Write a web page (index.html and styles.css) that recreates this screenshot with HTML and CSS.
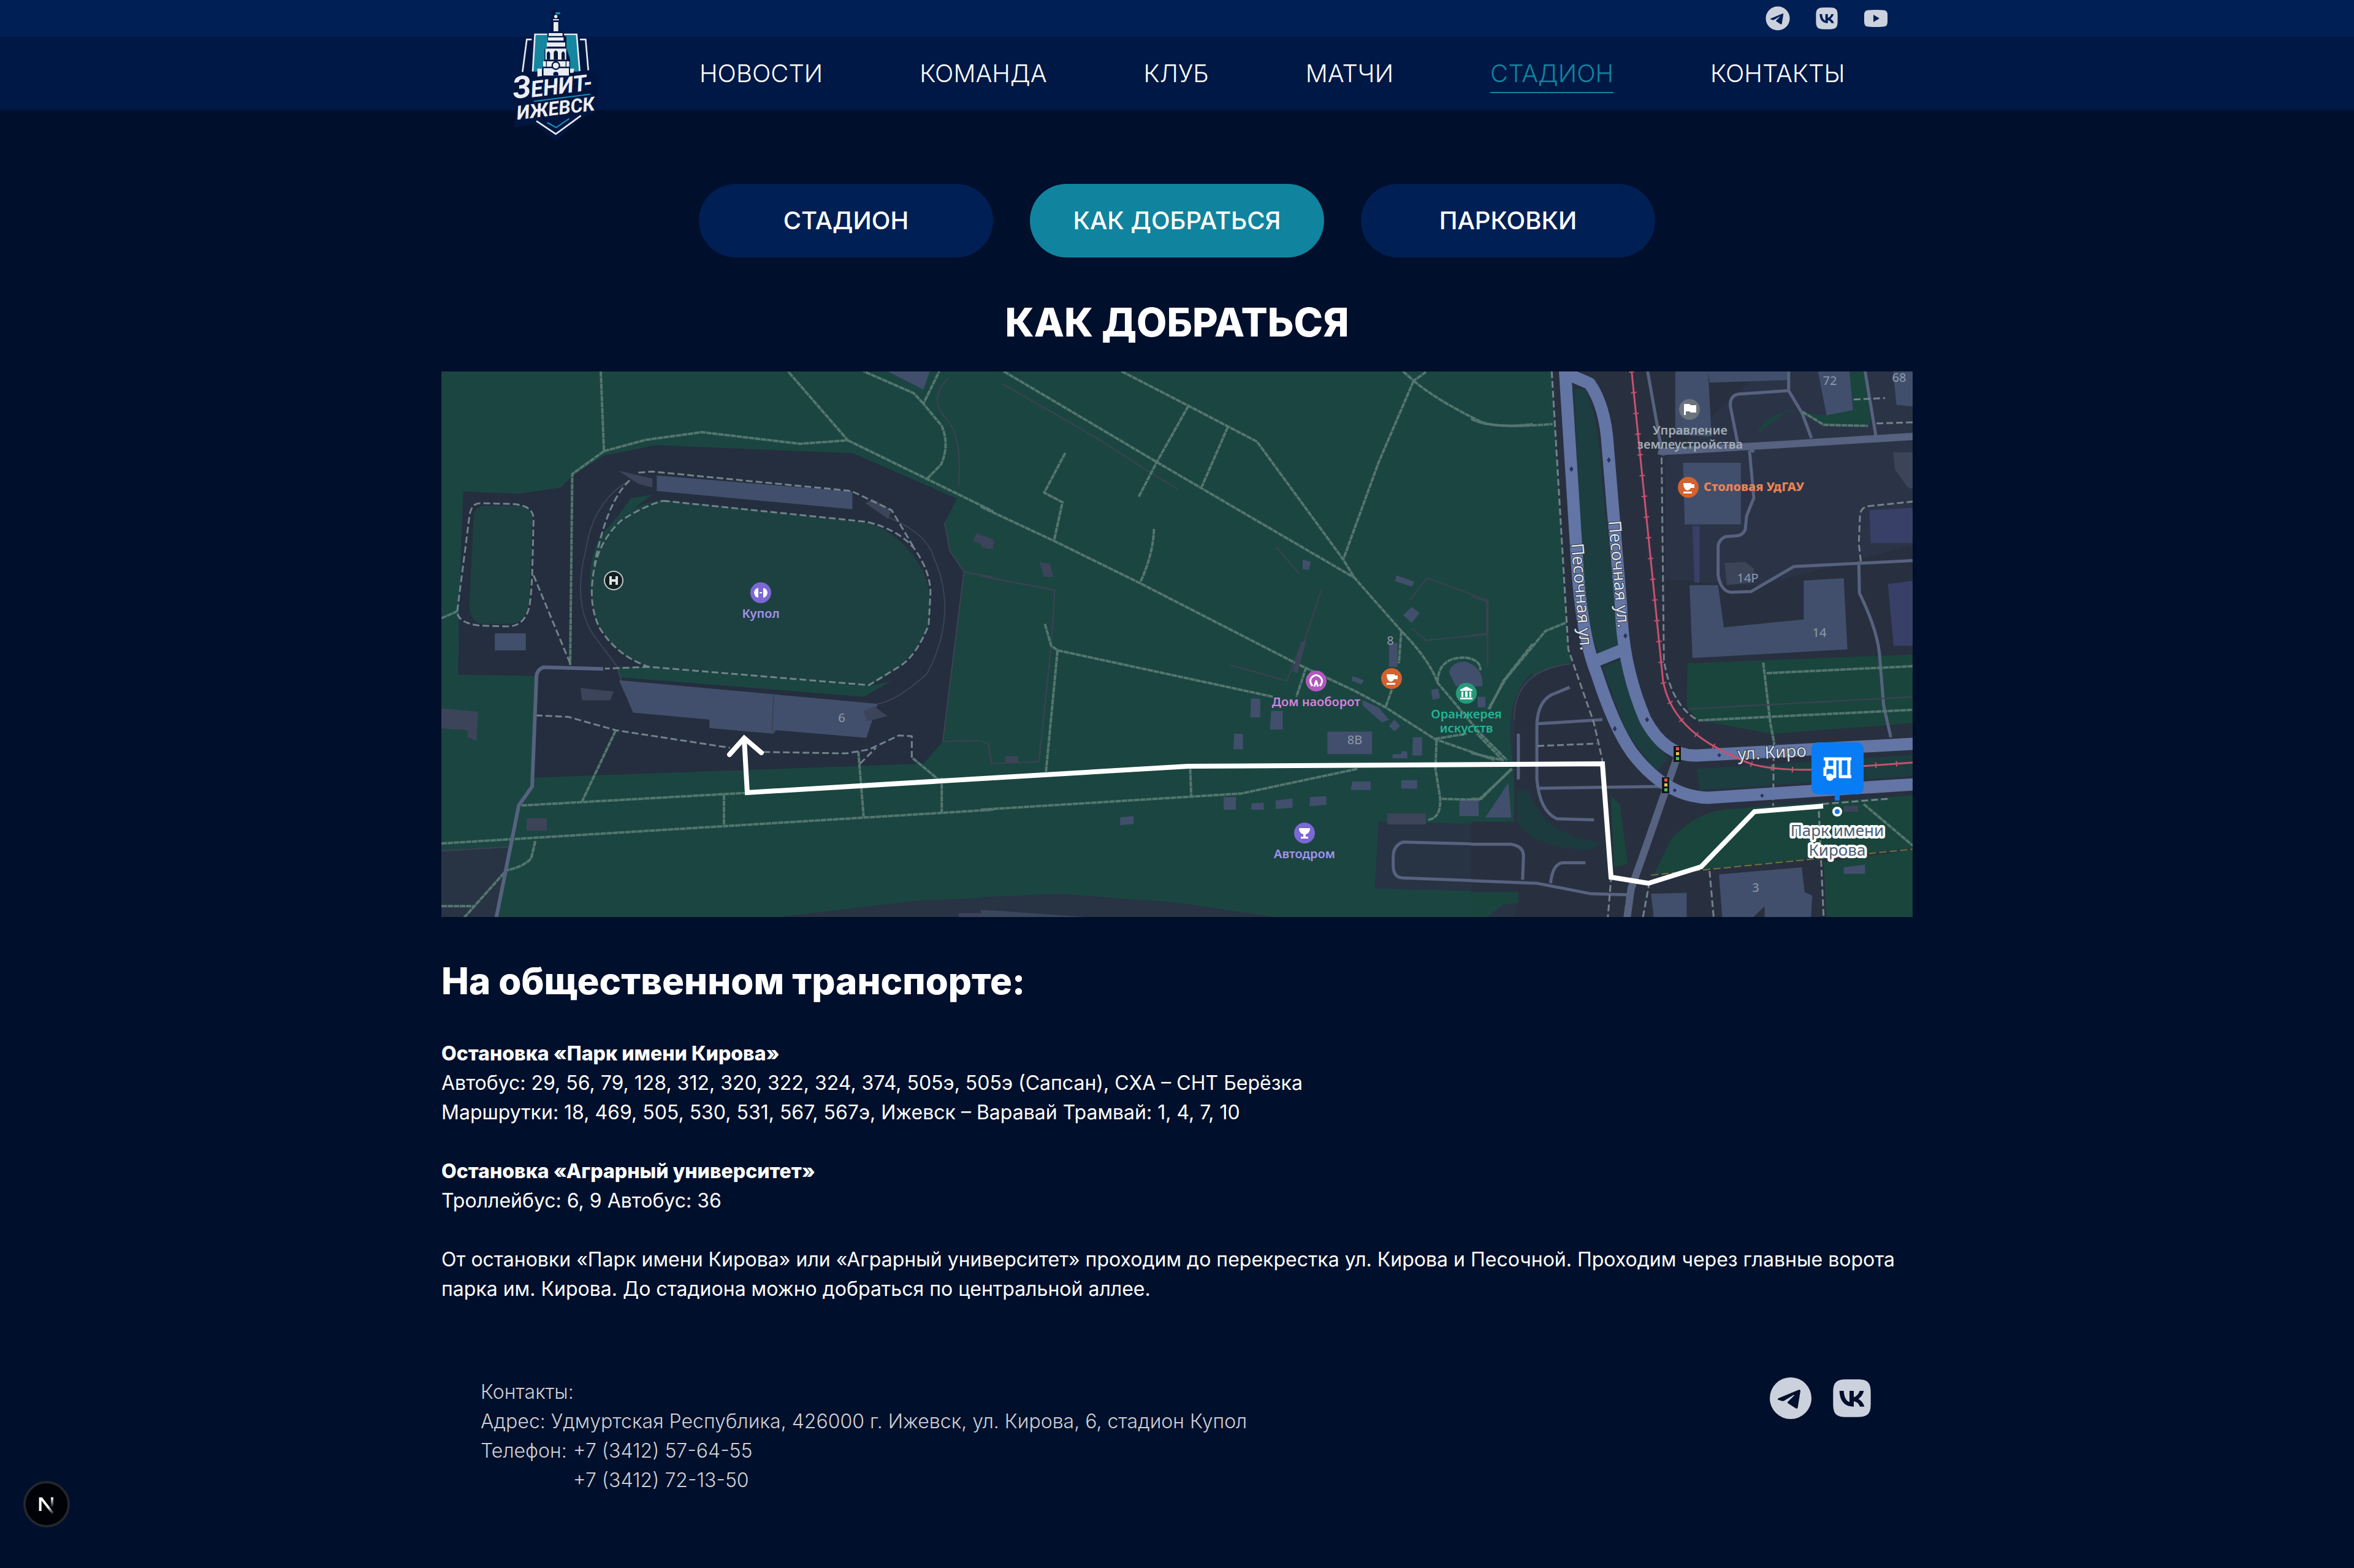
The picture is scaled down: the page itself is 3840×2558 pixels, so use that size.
FILE: index.html
```html
<!DOCTYPE html>
<html lang="ru">
<head>
<meta charset="utf-8">
<meta name="viewport" content="width=device-width, initial-scale=1">
<title>Как добраться — Зенит-Ижевск</title>
<link rel="stylesheet" href="styles.css">
</head>
<body>
<svg class="sprite" aria-hidden="true">
  <symbol id="telegram" viewBox="243 123 240 240">
    <path fill-rule="evenodd" d="M363 141a102 102 0 1 1 0 204a102 102 0 1 1 0-204ZM302 244C298 247 299 250 303 251L322 257Q327 258 332 255L376 228Q383 225 380 230L349 261Q346 265 350 268L387 292Q396 297 398 288L411 207Q411 200 403 202Z"/>
  </symbol>
  <symbol id="vk" viewBox="543 123 240 240">
    <path fill-rule="evenodd" d="M571 217C571 166 586 151 637 151H689C740 151 755 166 755 217V269C755 320 740 335 689 335H637C586 335 571 320 571 269ZM602 207C603 256 628 284 669 284H672V258C686 260 698 270 702 284H724C718 265 706 252 694 247C705 240 718 225 721 207H701C697 222 684 236 672 238V207H651V262C637 258 624 240 623 207Z"/>
  </symbol>
  <symbol id="youtube" viewBox="0 0 46 46">
    <path fill-rule="evenodd" d="M4 17Q4 9.500 11 9.500Q23 8.500 35 9.500Q42 9.500 42 17V29Q42 36.500 35 36.500Q23 37.500 11 36.500Q4 36.500 4 29ZM19 17V29L29 23Z"/>
  </symbol>
</svg>

<header class="header">
  <div class="topbar">
    <div class="container topbar-inner">
      <a class="social" href="#telegram-page" aria-label="Telegram"><svg><use href="#telegram"/></svg></a>
      <a class="social" href="#vk-page" aria-label="ВКонтакте"><svg><use href="#vk"/></svg></a>
      <a class="social" href="#youtube-page" aria-label="YouTube"><svg><use href="#youtube"/></svg></a>
    </div>
  </div>
  <div class="navbar">
    <div class="container">
      <nav class="nav">
        <a href="#news">НОВОСТИ</a>
        <a href="#team">КОМАНДА</a>
        <a href="#club">КЛУБ</a>
        <a href="#matches">МАТЧИ</a>
        <a class="current" href="#stadium" aria-current="page">СТАДИОН</a>
        <a href="#contacts">КОНТАКТЫ</a>
      </nav>
      <a class="logo" href="#home" aria-label="Зенит-Ижевск">
        <svg viewBox="0 0 540 660">
          <path class="logo-dark" d="M240 20h40v100l20 10h65l10 25h38l14 165 44 20-20 180-70 30-120 110-105-85-100 20 15-130-25-20 40-120 14-150h40l8-30h65l20-15Z"/>
          <path fill="#15869f" d="M162 142H220V200L205 210V260L190 320H146ZM300 142H360L375 320H330V260L312 205V150Z"/>
          <g class="logo-line">
            <path d="M147 320 158 138H218M300 138H362L377 318M97 322 118 163H142M378 163H406L419 314"/>
            <path d="M165 562 260 626 383 536"/>
          </g>
          <path class="logo-teal" d="M218 570 262 594 326 550M153 466 428 431"/>
          <path fill="#1a8fb5" d="M259 30H281V40H259Z"/>
          <circle cx="260" cy="51" r="8" fill="#e9ecf4"/>
          <path fill="#e9ecf4" d="M246 64h29v6h-29ZM249 78h23v45h-23ZM225 132h68v14h-68ZM222 153h76v16h-76ZM216 178h90v20h-90ZM209 208h102v54H209ZM198 270h128v26H198ZM200 304h124v36H200ZM170 306h22v36l-22 3ZM330 306h20l-4 20h-16Z"/>
          <path fill="#001640" d="M216 262v-32q8-18 16 0v32ZM250 262v-36q10-18 20 0v36ZM288 262v-32q8-18 16 0v32ZM248 340v-14q12-10 24 0v14ZM212 270h4v26h-4ZM308 270h4v26h-4Z"/>
          <circle cx="260" cy="291" r="18" fill="#e9ecf4" stroke="#001640" stroke-width="7"/>
          <g class="logo-text">
            <text x="54" y="454" font-size="150" transform="rotate(-7 54 454)">З</text>
            <text x="142" y="446" font-size="110" transform="rotate(-7 142 446)">ЕНИТ-</text>
            <text x="72" y="556" font-size="94" transform="rotate(-7 72 556)">ИЖЕВСК</text>
          </g>
        </svg>
      </a>
    </div>
  </div>
</header>

<main class="container main">
  <div class="tabs">
    <button class="tab" type="button">СТАДИОН</button>
    <button class="tab active" type="button">КАК ДОБРАТЬСЯ</button>
    <button class="tab" type="button">ПАРКОВКИ</button>
  </div>
  <h1>КАК ДОБРАТЬСЯ</h1>

  <svg class="map" viewBox="0 0 2400 890" role="img" aria-label="Схема прохода к стадиону">
    <rect width="2400" height="890" fill="#1b4541"/>

    <!-- west: stadium -->
    <g transform="translate(0 -6) scale(.57398)">
      <path fill="#242e3e" d="M62 352 220 358 340 340 375 305 460 250 610 220 1170 243 1465 372 1430 440 1445 520 1485 580 1425 1062 1370 1125 255 1165 268 876 48 872 50 700Z"/>
      <path fill="#283344" d="M0 1375 190 1362 150 1568H0ZM900 1568 1350 1515 1568 1505V1568Z"/>
      <path fill="#1d4140" d="M120 392H230Q258 400 258 430L250 660Q242 728 190 728H110Q76 715 80 660L92 420Q95 395 120 392ZM630 375 1210 440Q1310 470 1370 580 1400 650 1385 740 1330 850 1215 905L590 850Q500 830 440 720 400 580 450 480 520 390 630 375Z"/>
      <path fill="#1b4541" d="M440 500 540 370 600 360 520 420ZM500 850 590 850 1215 905 1280 890 1200 935 510 880Z"/>
      <path class="fence" d="M535 320Q430 380 410 520 370 680 440 770L500 850 512 890M1270 425Q1380 470 1400 540 1470 700 1380 870 1290 950 1240 955M1430 440 1445 520 1485 580 1425 1062 1530 1060M1485 580 1568 595M1440 30Q1380 90 1440 150 1480 200 1470 335M0 1373 190 1362"/>
      <path class="building" d="M612 306 1168 352V402L612 350ZM505 888 1240 955 1208 1052 950 1030 944 1040 762 1024V1000L545 980ZM152 755H240V803H152ZM1268 10H1388L1370 62Z"/>
      <path class="building dim" d="M502 292 600 315V340L560 330ZM1205 385 1225 372 1280 405 1270 430ZM395 910 490 920 480 945H400ZM0 968 105 978 100 1060 75 1050V1030L0 1025ZM242 1280H300V1316H242ZM1520 470 1568 488V516L1512 492ZM1200 975 1230 962 1268 990 1210 1005ZM1470 1550H1568V1568H1470Z"/>
      <path class="fence" d="M944 930 940 1036"/>
      <path class="path" d="M453 10 462 237 372 302 366 845M462 237 580 205 740 183 1020 216 1155 206 985 10M1155 206 1380 316 1568 408M1380 316 1420 275Q1445 220 1422 165L1370 102 1415 10M1370 102 1342 72 1200 10M228 1244 870 1208M0 1352 1568 1256M495 1032 400 1232M803 1213V1303M1185 1090 1200 1275M1422 1165V1265M1340 1110 1410 1168M0 712 45 692M267 1345 255 1395Q230 1420 185 1428L60 1568M0 1530H90"/>
      <path class="foot" d="M45 692 80 420Q85 385 110 385L200 387Q262 390 262 430L258 590Q255 650 250 680 235 735 190 735L110 733Q45 725 45 692M262 590 366 840M560 298 600 295 1165 350 1280 405 1345 515M535 320Q470 380 435 560M630 378 1210 438Q1300 460 1345 515 1390 580 1390 640L1385 730Q1350 820 1300 850L1215 902 590 850Q500 820 450 740 420 680 430 600 440 500 510 435 570 395 630 378M590 850 465 855M268 988 360 992 495 1030 820 1080M915 1092 1150 1096 1215 1085 1300 1045 1337 1047V1108M1190 1125 1235 1080"/>
      <path class="lane" d="M460 856 290 851Q268 860 270 885L258 1190 220 1244 155 1568"/>
    </g>

    <!-- centre: park -->
    <g transform="translate(880 -6) scale(.57398)">
      <path fill="#283344" d="M0 1505 220 1495 560 1520 880 1568H0ZM1130 1290 1568 1300V1568H1430L1530 1490 1120 1480ZM1568 865Q1500 930 1505 1050L1525 1300H1568Z"/>
      <path fill="#3a465c" d="M0 1540 400 1568H0Z"/>
      <path class="fence" d="M60 45 330 200 470 290 560 345M0 592 210 632 200 790 165 1120 30 1125 22 1070 0 1060M968 630 915 790M710 845 870 890 905 800M840 510 905 585M1225 740 1265 775 1438 758V660L1268 597 1220 660M1440 760V850"/>
      <path class="path" d="M65 10 500 268 1062 597M400 10 590 108 785 210 1030 545 1062 597 1195 748Q1275 830 1298 895L1420 1040 1495 1115M590 108 500 268 448 368M702 168 628 338M1230 37 1130 270 1030 545M1200 10 1230 37 1265 12M1230 37Q1300 95 1425 155 1480 172 1568 160M0 395 208 492 452 612 900 842 1062 918 1150 965 1290 1055 1460 1115M240 242 180 355 232 382 208 492M492 458Q490 530 452 612M182 728 200 790 218 803 830 935M218 803 185 1150M925 850 897 935M1195 748 1188 840M1168 915 1150 965M1298 895Q1300 820 1380 824 1420 830 1420 860M1568 785 1485 890 1445 970M1290 1055 1380 1040M1295 1060 1292 1140 1305 1220Q1310 1280 1270 1285M1310 1225 1415 1228 1510 1140M0 1256 740 1210 1070 1140M595 1140 598 1215"/>
      <path class="building" d="M1182 590 1232 608 1225 622 1176 606ZM1225 680 1247 697 1225 725 1200 703ZM1160 782H1184V850H1160ZM1330 865Q1340 835 1375 835 1430 850 1425 905H1350ZM768 940H794V994H766ZM825 975H858V1028H822ZM720 1040H745V1084H718ZM985 1034H1112V1098H985ZM1228 1050H1254V1102H1226ZM1056 876 1088 888 1082 900 1054 890ZM1085 945 1130 965 1160 1000 1140 1008 1085 960ZM1175 1000 1192 1018 1175 1034 1160 1018ZM1195 1090H1212V1110H1170V1098H1195ZM1055 1176H1108V1200H1052ZM1195 1172H1240V1196H1195ZM690 1220H725V1256H690ZM770 1238 804 1236V1256H768ZM838 1230 886 1224V1250L838 1254ZM936 1220 982 1218V1242L934 1246ZM396 1278 434 1274V1296L396 1300ZM1360 1230H1415V1274H1360ZM1434 1278 1498 1184 1505 1278ZM915 545 938 552 932 575 914 572ZM1280 915 1300 912 1305 938 1284 944ZM1412 935H1434V965H1412Z"/>
      <path class="building dim" d="M0 480 40 495 25 516 0 508ZM166 552 196 556 206 594 180 594ZM1155 1266H1265V1298H1155ZM70 1104H106V1122H70ZM910 780 925 775 900 868 886 862Z"/>
      <path class="lane thin" d="M1540 1458V1390Q1535 1358 1500 1356L1200 1348Q1172 1358 1172 1390V1420Q1175 1450 1200 1450L1568 1464"/>
    </g>

    <!-- east: streets -->
    <g transform="matrix(.46556 0 0 .57398 1680 -6)">
      <path fill="#28303f" d="M280 0 340 800 350 842Q200 850 155 950L150 1290H0V1490H170L150 1568H1568V0Z"/>
      <path fill="#2b3447" d="M1030 0H1568V500L1000 620 680 600V260Z"/>
      <path fill="#1d3e40" d="M360 60H400Q450 160 455 300L520 790 450 820 395 700ZM460 850 525 830 600 1020 690 1110 650 1150 540 1030ZM790 1140 1550 1100V1160L800 1200Z"/>
      <path fill="#1a453d" d="M758 840 1550 815V1010L1050 1040 790 1000 755 960ZM490 1215 520 1240 548 1410 500 1420ZM640 1440 700 1340Q790 1260 900 1255L1550 1215V1365ZM1235 1405 1550 1370V1568H1245ZM1000 190Q1030 135 1110 125L1160 125 1240 160 1400 160 1385 0H1320L1340 120 1230 135 1110 120ZM0 1495H165V1520L50 1530V1568H0Z"/>
      <path fill="#1c3b3f" d="M200 1200Q250 1330 460 1350L420 1370Q230 1370 160 1290V1200Z"/>
      <path class="building" d="M715 10H830L842 195 715 190ZM742 270H945V445H748ZM765 618H865L885 738 1165 715V605L1305 598 1318 800 775 825ZM1215 10H1325L1338 120 1245 135ZM1478 10H1550V110L1490 105ZM868 1440 1158 1420 1168 1490 1195 1500 1190 1568H1028V1530L980 1568H880ZM630 1495 755 1492V1568H640ZM830 10H1110V35L835 42ZM50 1278 130 1180 140 1278ZM1305 1420 1380 1412V1438H1305Z"/>
      <path fill="#384068" d="M775 450H800V610H782ZM1395 405 1550 398V498H1400ZM1460 615 1550 605V790H1480Z"/>
      <path class="building dim" d="M888 555 960 552 990 570V610L895 618ZM1478 240H1550V345L1530 340 1485 290ZM1305 1245H1355V1262H1305Z"/>
      <path class="lane thin" d="M670 245 665 225 618 10M990 240 975 225M975 235 990 370 965 420 960 460Q950 478 925 478L890 480Q865 490 865 510V590Q875 635 910 638L980 636 1130 565 1550 548M935 220 908 110Q905 80 935 75L1112 65V10M1112 65 1160 130 1192 200M1380 10 1418 195M1358 550 1360 640Q1420 740 1430 810L1445 960 1470 1050M345 908 280 930Q235 950 230 1010V1170Q240 1260 300 1282L430 1285M230 1012 460 1000M235 1195 660 1190M0 1354H140Q185 1360 183 1390L180 1455M0 1458 230 1465 420 1495 550 1498M400 1407H320Q285 1410 278 1465M165 1040V1170"/>
      <path class="lane wide" d="M665 248 668 238 1090 218 1550 195"/>
      <path class="path" d="M0 145Q60 175 285 160M330 725 260 748 120 885 60 970M0 1095 110 1115 20 1040M0 1225H35L140 1140M1035 868 1550 848M1023 838 1048 1010 1062 1070M795 1002 1550 972M1375 1240 1550 1360M1160 125 1235 162 1390 165"/>
      <path class="foot" d="M282 10 340 800 430 1010 458 1110 490 1450 478 1568M667 255 675 830Q700 960 795 1002M1365 550 1358 500 1362 420Q1365 395 1395 393L1550 380M1340 90 1450 86M1420 158 1550 155M232 1075 440 1068M1060 1070 1058 1245M1230 1240 1460 1225M1218 1260 1235 1568M835 1430 850 1568M625 1460 600 1568"/>
      <path fill="none" stroke="#71743b" stroke-width="2" stroke-dasharray="12 5" vector-effect="non-scaling-stroke" d="M630 1442 1550 1368"/>
      <path class="fence" d="M150 1000Q150 860 345 842M0 650 58 665V755L0 760M760 970 1550 935"/>
      <path class="lane wide" d="M720 1110 600 1390 560 1480 545 1568"/>
      <path class="road" d="M328 0 370 540Q385 760 440 870 500 1020 560 1090 680 1220 830 1222L1568 1183M345 20 415 45Q470 110 478 220L525 680Q530 850 610 1000 680 1105 790 1102L1568 1068M430 835 535 800"/>
      <path fill="none" stroke="#c9506f" stroke-width="3" vector-effect="non-scaling-stroke" d="M562 10 672 890Q700 1010 860 1080 940 1115 985 1127 1070 1145 1200 1142L1550 1122"/>
      <path fill="none" stroke="#c9506f" stroke-width="9" stroke-dasharray="2 32" vector-effect="non-scaling-stroke" d="M562 10 672 890Q700 1010 860 1080 940 1115 985 1127 1070 1145 1200 1142L1550 1122"/>
      <path fill="#27355c" d="M344 288l7-8 7 8-7 8ZM475 262l7-8 7 8-7 8ZM533 762l7-8 7 8-7 8ZM609 1000l7-8 7 8-7 8ZM496 1026l7-8 7 8-7 8ZM862 1101l7-6 7 6-7 6ZM706 1201l7-6 7 6-7 6ZM1012 1216l7-6 7 6-7 6Z"/>
    </g>

    <!-- traffic lights -->
    <g>
      <path fill="#14171c" d="M2010 611h12v26h-12ZM1991 662h12v26h-12Z"/>
      <path fill="#e0564c" d="M2014 613h5v5h-5ZM1995 664h5v5h-5Z"/>
      <path fill="#e6c54a" d="M2014 621h5v5h-5ZM1995 672h5v5h-5Z"/>
      <path fill="#4fbf5d" d="M2014 629h5v5h-5ZM1995 680h5v5h-5Z"/>
    </g>

    <!-- walking route -->
    <path class="route" d="M494 600 499 687 900 663 1219 644 1894 640 1908 825 1969 835 2055 808 2142 718 2254 709"/>
    <path class="route" stroke-linecap="round" d="M470 625 494 598 522 622"/>

    <!-- places -->
    <circle cx="281" cy="341" r="15" fill="#13201f" stroke="#c3c9ce" stroke-width="2"/>
    <path fill="none" stroke="#dfe3e6" stroke-width="4" d="M276 334v14M286 334v14M276 341h10"/>
    <circle cx="521" cy="361" r="17" fill="#7b68d4"/>
    <path fill="#fff" d="M510 361q1-7 7-8v16q-6-1-7-8ZM532 361q-1-7-7-8v16q6-1 7-8ZM519 360h4v2h-4Z"/>
    <circle cx="1427" cy="505" r="17" fill="#b158bd"/>
    <path fill="none" stroke="#fff" stroke-width="3" d="M1421 513q-6-7-2-13 8-9 16 0 4 6-2 13M1424 514l3-9 3 9"/>
    <circle cx="1550" cy="501" r="17" fill="#d3622f"/>
    <path fill="#fff" d="M1542 494h13v2h5v6h-6q-2 4-6 4-6-2-6-12ZM1542 508h14v3h-14Z"/>
    <circle cx="1672" cy="525" r="17" fill="#279a7c"/>
    <path fill="#fff" d="M1662 519l10-5 10 5v2h-20ZM1664 522h3v9h-3ZM1670 522h4v9h-4ZM1677 522h3v9h-3ZM1662 532h20v3h-20Z"/>
    <circle cx="1408" cy="753" r="17" fill="#7b68d4"/>
    <path fill="#fff" d="M1399 745h18q0 8-7 10v4h4v3h-12v-3h4v-4q-7-2-7-10Z"/>
    <circle cx="2036" cy="62" r="17" fill="#6b747c"/>
    <path fill="#fff" d="M2027 53h9l2 2h9v12h-9l-2-2h-6v6h-3Z"/>
    <circle cx="2034" cy="189" r="17" fill="#d3622f"/>
    <path fill="#fff" d="M2026 182h13v2h5v6h-6q-2 4-6 4-6-2-6-12ZM2026 196h14v3h-14Z"/>

    <g class="place">
      <text x="521" y="402" fill="#a493ef">Купол</text>
      <text x="1427" y="546" fill="#d583dc">Дом наоборот</text>
      <text x="1672" y="566" fill="#25b396">Оранжерея</text>
      <text x="1672" y="589" fill="#25b396">искусств</text>
      <text x="1408" y="794" fill="#a493ef">Автодром</text>
      <text x="2037" y="103" fill="#a3adb5">Управление</text>
      <text x="2037" y="126" fill="#a3adb5">землеустройства</text>
      <text class="strong" x="2141" y="195" fill="#ee8352">Столовая УдГАУ</text>
    </g>
    <g class="house">
      <text x="653" y="572">6</text>
      <text x="1548" y="446">8</text>
      <text x="1490" y="608">8В</text>
      <text x="2265" y="22">72</text>
      <text x="2378" y="17">68</text>
      <text x="2131" y="344">14Р</text>
      <text x="2248" y="433">14</text>
      <text x="2144" y="849">3</text>
    </g>
    <g class="street">
      <text x="1843" y="281" transform="rotate(85 1843 281)">Песочная ул.</text>
      <text x="1904" y="244" transform="rotate(85 1904 244)">Песочная ул.</text>
      <text x="2115" y="634" transform="rotate(-3 2115 634)">ул. Киро</text>
    </g>

    <path fill="#087cf5" d="M2247 605h61q12 0 12 12v61q0 12-12 12h-27v10h-8v-10h-26q-12 0-12-12v-61q0-12 12-12Z"/>
    <path fill="none" stroke="#fff" stroke-width="5" d="M2255 632h45M2260 632v13M2273 632v15M2257 646h16v15h-3M2257 646v14M2282 632v30M2296 632v30M2280 661h20"/>
    <circle cx="2265" cy="662" r="6" fill="#fff"/>
    <circle cx="2277" cy="718" r="6" fill="#1b74e8" stroke="#fff" stroke-width="4"/>
    <g class="stop">
      <text x="2277" y="758">Парк имени</text>
      <text x="2277" y="790">Кирова</text>
    </g>
  </svg>

  <h2>На общественном транспорте:</h2>
  <section class="stops">
    <h3>Остановка «Парк имени Кирова»</h3>
    <p>Автобус: 29, 56, 79, 128, 312, 320, 322, 324, 374, 505э, 505э (Сапсан), СХА – СНТ Берёзка</p>
    <p>Маршрутки: 18, 469, 505, 530, 531, 567, 567э, Ижевск – Варавай Трамвай: 1, 4, 7, 10</p>
  </section>
  <section class="stops">
    <h3>Остановка «Аграрный университет»</h3>
    <p>Троллейбус: 6, 9 Автобус: 36</p>
  </section>
  <p>От остановки «Парк имени Кирова» или «Аграрный университет» проходим до перекрестка ул. Кирова и Песочной. Проходим через главные ворота парка им. Кирова. До стадиона можно добраться по центральной аллее.</p>
</main>

<footer class="container footer">
  <address class="contacts">
    <p>Контакты:</p>
    <p>Адрес: Удмуртская Республика, 426000 г. Ижевск, ул. Кирова, 6, стадион Купол</p>
    <div class="phones">
      <span>Телефон:</span>
      <div>
        <a href="tel:+73412576455">+7 (3412) 57-64-55</a>
        <a href="tel:+73412721350">+7 (3412) 72-13-50</a>
      </div>
    </div>
  </address>
  <div class="footer-social">
    <a class="social large" href="#telegram-page" aria-label="Telegram"><svg><use href="#telegram"/></svg></a>
    <a class="social large" href="#vk-page" aria-label="ВКонтакте"><svg><use href="#vk"/></svg></a>
  </div>
</footer>

<button class="dev-badge" type="button" aria-label="Next.js">
  <svg viewBox="126 120 204 204">
    <defs>
      <linearGradient id="fade-a" gradientUnits="userSpaceOnUse" x1="235" y1="236" x2="262" y2="270"><stop stop-color="#fff"/><stop offset="1" stop-color="#fff" stop-opacity="0"/></linearGradient>
      <linearGradient id="fade-b" gradientUnits="userSpaceOnUse" x1="255" y1="188" x2="255" y2="238"><stop stop-color="#fff"/><stop offset="1" stop-color="#fff" stop-opacity="0"/></linearGradient>
    </defs>
    <path fill="url(#fade-a)" d="M191 188H206L266 266 256 272 203 204V255H191Z"/>
    <path fill="url(#fade-b)" d="M249 188H261V238H249Z"/>
  </svg>
</button>
</body>
</html>
```
FILE: styles.css
```css
* {
  box-sizing: border-box;
}

body {
  margin: 0;
  background: #000f2b;
  color: #fff;
  font-family: Inter, "Liberation Sans", sans-serif;
  font-size: 32px;
  line-height: 48px;
}

h1, h2, h3, p {
  margin: 0;
}

a {
  color: inherit;
  text-decoration: none;
}

button {
  border: 0;
  padding: 0;
  color: inherit;
  font: inherit;
  cursor: pointer;
}

.sprite {
  display: none;
}

.container {
  width: 100%;
  max-width: 2400px;
  margin: 0 auto;
}

/* Header */
.topbar {
  background: #001f54;
}

.topbar-inner {
  display: flex;
  justify-content: flex-end;
  align-items: center;
  gap: 34px;
  height: 60px;
  padding-right: 37px;
}

.social {
  display: block;
  width: 46px;
  height: 46px;
  fill: #ccd2dd;
}

.social.large {
  width: 80px;
  height: 80px;
}

.social svg {
  display: block;
  width: 100%;
  height: 100%;
}

.navbar {
  background: #001845;
}

.navbar .container {
  position: relative;
}

.nav {
  display: flex;
  align-items: center;
  gap: 158px;
  height: 120px;
  padding-left: 421px;
  font-size: 40px;
  font-weight: 300;
  line-height: 60px;
}

.nav .current {
  color: #10849e;
  box-shadow: 0 2px 0 #10849e;
}

.logo {
  position: absolute;
  top: -50px;
  left: 100px;
  width: 180px;
  height: 220px;
}

.logo svg {
  display: block;
}

.logo-dark {
  fill: #001640;
}

.logo-line {
  fill: none;
  stroke: #e4e8f0;
  stroke-width: 8;
}

.logo-teal {
  fill: none;
  stroke: #1a8fb5;
  stroke-width: 6;
}

.logo-text {
  fill: #eceef4;
  stroke: #001640;
  stroke-width: 8;
  paint-order: stroke;
  font-family: Roboto, "Liberation Sans", sans-serif;
  font-style: italic;
  font-weight: 700;
}

/* Content */
.main {
  padding-top: 120px;
}

.tabs {
  display: flex;
  justify-content: center;
  gap: 60px;
}

.tab {
  width: 480px;
  height: 120px;
  border-radius: 60px;
  background: #001f54;
  font-size: 40px;
  font-weight: 500;
}

.tab.active {
  background: #10849e;
}

h1 {
  margin: 60px 0 34px;
  font-size: 64px;
  font-weight: 800;
  line-height: 92px;
  text-align: center;
}

h2 {
  margin: 68px 0 59px;
  font-size: 60px;
  font-weight: 800;
  line-height: 72px;
}

h3 {
  font-size: 32px;
  font-weight: 800;
}

.stops {
  margin-bottom: 48px;
}

/* Map */
.map {
  display: block;
  width: 100%;
  height: auto;
}

.map path {
  stroke-linejoin: round;
}

.fence, .path, .foot, .lane, .road {
  fill: none;
  vector-effect: non-scaling-stroke;
}

.fence {
  stroke: #3d4253;
  stroke-width: 2;
}

.path {
  stroke: #54766f;
  stroke-width: 4;
  stroke-dasharray: 9 1;
}

.foot {
  stroke: #71828a;
  stroke-width: 3;
  stroke-dasharray: 11 5;
}

.lane {
  stroke: #56627f;
  stroke-width: 6;
}

.lane.thin {
  stroke-width: 5;
}

.lane.wide {
  stroke-width: 12;
}

.road {
  stroke: #6375a4;
  stroke-width: 20;
}

.building {
  fill: #414f6c;
}

.building.dim {
  fill: #3c4459;
}

.route {
  fill: none;
  stroke: #fff;
  stroke-width: 8;
}

.map .route {
  stroke-linejoin: miter;
}

.place, .house, .street, .stop {
  font-family: "Noto Sans", sans-serif;
}

.place {
  font-size: 20px;
  font-weight: 600;
  text-anchor: middle;
}

.place .strong {
  font-weight: 800;
}

.house {
  fill: #8f9bab;
  font-size: 20px;
  text-anchor: middle;
}

.street {
  fill: #dde2e9;
  stroke: #28303f;
  stroke-width: 2;
  paint-order: stroke;
  font-size: 28px;
}

.stop {
  fill: #4b5f75;
  stroke: #fff;
  stroke-width: 8;
  stroke-linejoin: round;
  paint-order: stroke;
  font-size: 26px;
  text-anchor: middle;
}

/* Footer */
.footer {
  display: flex;
  justify-content: space-between;
  align-items: flex-start;
  padding: 120px 59px 118px 64px;
  color: #cfd1d5;
  font-weight: 300;
}

.contacts {
  font-style: normal;
}

.phones {
  display: flex;
  gap: 10px;
}

.phones a {
  display: block;
}

.footer-social {
  display: flex;
  gap: 20px;
  margin-top: -6px;
}

.dev-badge {
  position: fixed;
  bottom: 66px;
  left: 38px;
  width: 76px;
  height: 76px;
  border: 4px solid #23262c;
  border-radius: 50%;
  background: #000208;
}

.dev-badge svg {
  display: block;
  width: 100%;
}
```
